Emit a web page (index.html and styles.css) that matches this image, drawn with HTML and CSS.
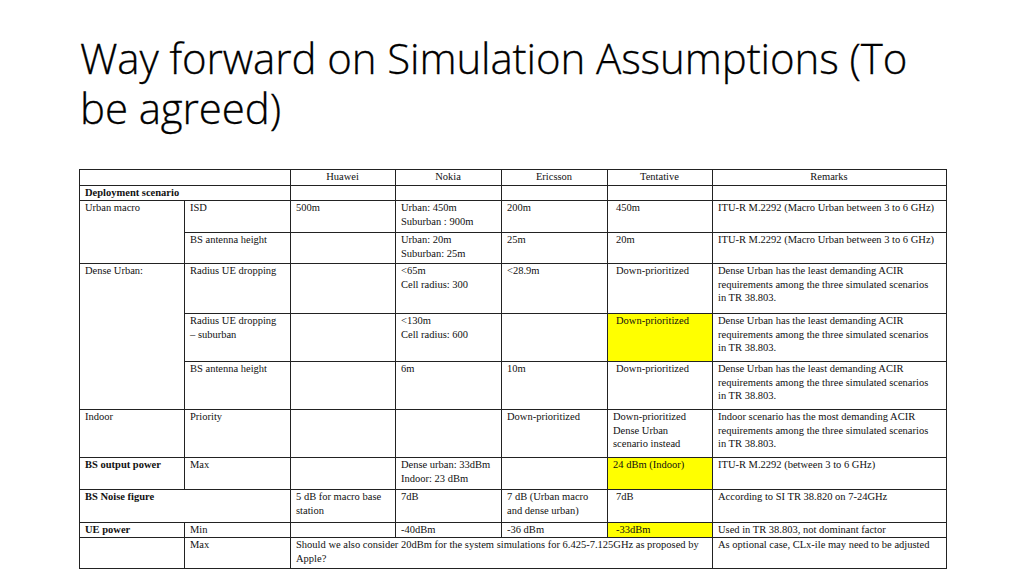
FILE: index.html
```html
<!DOCTYPE html>
<html>
<head>
<meta charset="utf-8">
<link rel="stylesheet" href="styles.css">
</head>
<body>
<div class="slide">
  <h1 class="title">Way forward on Simulation Assumptions (To be agreed)</h1>
  <table class="grid">
    <colgroup>
      <col class="c1"><col class="c2"><col class="c3"><col class="c4"><col class="c5"><col class="c6"><col class="c7">
    </colgroup>
    <tr class="h16 head">
      <td colspan="2"></td><td>Huawei</td><td>Nokia</td><td>Ericsson</td><td>Tentative</td><td>Remarks</td>
    </tr>
    <tr class="h15">
      <td colspan="2" class="b">Deployment scenario</td><td></td><td></td><td></td><td></td><td></td>
    </tr>
    <tr class="h32">
      <td rowspan="2">Urban macro</td><td>ISD</td><td>500m</td><td>Urban: 450m<br>Suburban : 900m</td><td>200m</td><td class="ind">450m</td><td class="rm">ITU-R M.2292 (Macro Urban between 3 to 6 GHz)</td>
    </tr>
    <tr class="h31">
      <td>BS antenna height</td><td></td><td>Urban: 20m<br>Suburban: 25m</td><td>25m</td><td class="ind">20m</td><td class="rm">ITU-R M.2292 (Macro Urban between 3 to 6 GHz)</td>
    </tr>
    <tr class="h50">
      <td rowspan="3">Dense Urban:</td><td>Radius UE dropping</td><td></td><td>&lt;65m<br>Cell radius: 300</td><td>&lt;28.9m</td><td class="ind">Down-prioritized</td><td class="rm">Dense Urban has the least demanding ACIR requirements among the three simulated scenarios in TR 38.803.</td>
    </tr>
    <tr class="h48">
      <td>Radius UE dropping<br>– suburban</td><td></td><td>&lt;130m<br>Cell radius: 600</td><td></td><td class="hl ind">Down-prioritized</td><td class="rm">Dense Urban has the least demanding ACIR requirements among the three simulated scenarios in TR 38.803.</td>
    </tr>
    <tr class="h48">
      <td>BS antenna height</td><td></td><td>6m</td><td>10m</td><td class="ind">Down-prioritized</td><td class="rm">Dense Urban has the least demanding ACIR requirements among the three simulated scenarios in TR 38.803.</td>
    </tr>
    <tr class="h48">
      <td>Indoor</td><td>Priority</td><td></td><td></td><td>Down-prioritized</td><td>Down-prioritized<br>Dense Urban<br>scenario instead</td><td class="rm">Indoor scenario has the most demanding ACIR requirements among the three simulated scenarios in TR 38.803.</td>
    </tr>
    <tr class="h32">
      <td class="b">BS output power</td><td>Max</td><td></td><td>Dense urban: 33dBm<br>Indoor: 23 dBm</td><td></td><td class="hl">24 dBm (Indoor)</td><td class="rm">ITU-R M.2292 (between 3 to 6 GHz)</td>
    </tr>
    <tr class="h33">
      <td colspan="2" class="b">BS Noise figure</td><td>5 dB for macro base station</td><td>7dB</td><td>7 dB (Urban macro and dense urban)</td><td class="ind">7dB</td><td class="rm">According to SI TR 38.820 on 7-24GHz</td>
    </tr>
    <tr class="h15">
      <td class="b">UE power</td><td>Min</td><td></td><td>-40dBm</td><td>-36 dBm</td><td class="hl ind">-33dBm</td><td class="rm">Used in TR 38.803, not dominant factor</td>
    </tr>
    <tr class="h31">
      <td></td><td>Max</td><td colspan="4">Should we also consider 20dBm for the system simulations for 6.425-7.125GHz as proposed by Apple?</td><td class="rm">As optional case, CLx-ile may need to be adjusted</td>
    </tr>
  </table>
</div>
</body>
</html>
```
FILE: styles.css
```css
html, body {
  margin: 0;
  padding: 0;
  background: #ffffff;
}
.slide {
  width: 1024px;
  height: 576px;
  padding: 0 0 0 79px;
  box-sizing: border-box;
  overflow: hidden;
}
.title {
  margin: 0;
  padding: 33px 100px 0 1px;
  height: 138px;
  box-sizing: border-box;
  font-family: "Open Sans", sans-serif;
  font-weight: 300;
  font-size: 42px;
  line-height: 50px;
  color: #000;
  letter-spacing: -0.1px;
  -webkit-text-stroke: 0.3px #000;
}
.grid {
  border-collapse: collapse;
  table-layout: fixed;
  width: 867px;
  margin-top: 31px;
  font-family: "Liberation Serif", "Times New Roman", serif;
  font-size: 10.5px;
  line-height: 13.7px;
  color: #111;
}
.c1 { width: 105px; }
.c2 { width: 106px; }
.c3 { width: 105px; }
.c4 { width: 106px; }
.c5 { width: 106px; }
.c6 { width: 105px; }
.c7 { width: 234px; }
.grid td {
  border: 1px solid #222;
  padding: 0 6px 0 5px;
  vertical-align: top;
  text-align: left;
  overflow: hidden;
}
.grid td.rm { padding-right: 9px; }
.head td { text-align: center; }
.b { font-weight: bold; }
.hl { background: #ffff00; }
.grid td.ind { padding-left: 8px; }
.h15 { height: 15px; }
.h16 { height: 16px; }
.h31 { height: 31px; }
.h32 { height: 32px; }
.h33 { height: 33px; }
.h48 { height: 48px; }
.h50 { height: 50px; }
```
